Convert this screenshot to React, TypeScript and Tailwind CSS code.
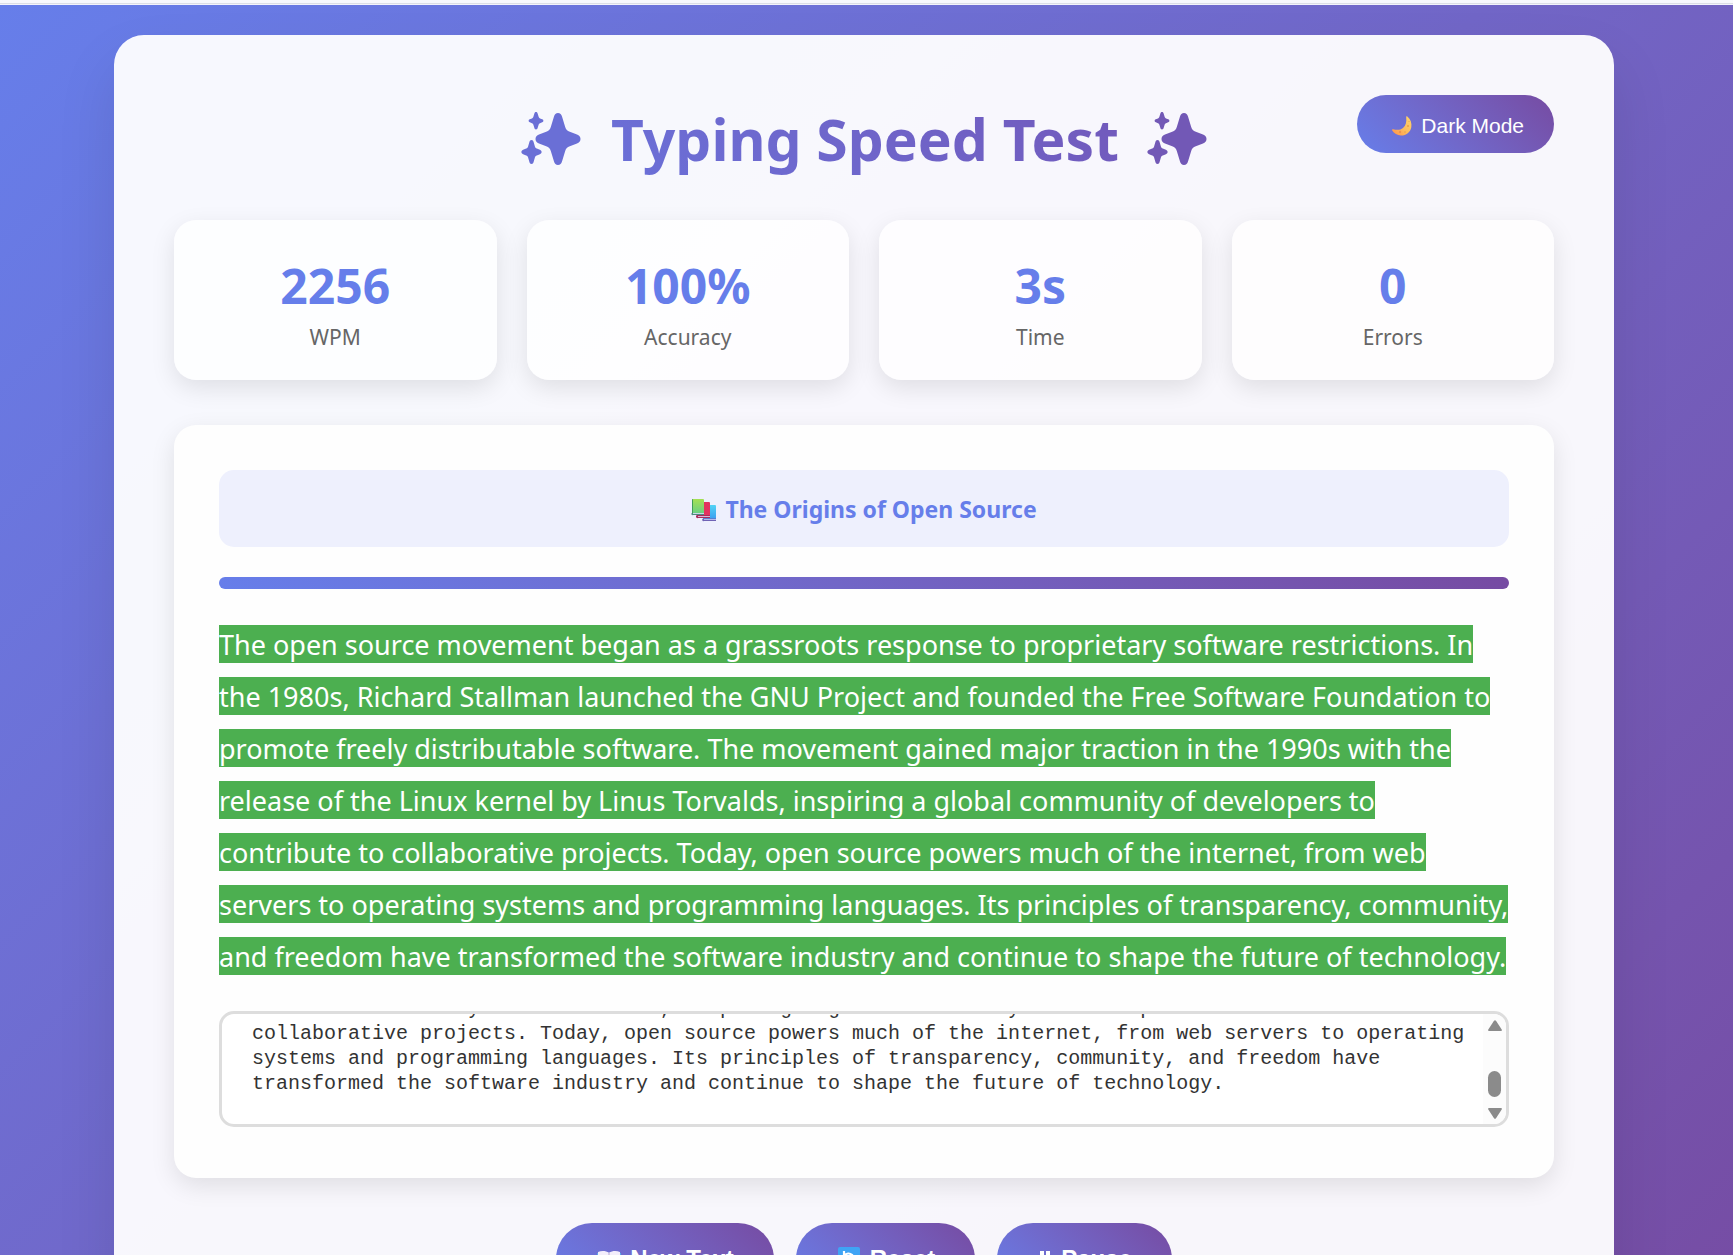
import { useEffect, useRef, useState } from "react";

const stats = [
  { value: "2256", label: "WPM" },
  { value: "100%", label: "Accuracy" },
  { value: "3s", label: "Time" },
  { value: "0", label: "Errors" },
];

const passageLines = [
  "The open source movement began as a grassroots response to proprietary software restrictions. In",
  "the 1980s, Richard Stallman launched the GNU Project and founded the Free Software Foundation to",
  "promote freely distributable software. The movement gained major traction in the 1990s with the",
  "release of the Linux kernel by Linus Torvalds, inspiring a global community of developers to",
  "contribute to collaborative projects. Today, open source powers much of the internet, from web",
  "servers to operating systems and programming languages. Its principles of transparency, community,",
  "and freedom have transformed the software industry and continue to shape the future of technology.",
];

function Sparkles({ className }: { className: string }) {
  return (
    <svg viewBox="0 0 60 54" className={className} fill="currentColor" aria-hidden="true">
      <path d="M37 1c2.200 0 3.300 1.300 4 3.500l3.200 10.500c.8 2.600 2 3.900 4.600 4.800l7.200 2.700c2.200.9 3.500 2.200 3.500 4.500s-1.300 3.600-3.500 4.500l-7.200 2.700c-2.600.9-3.800 2.200-4.600 4.800L41 49.500c-.7 2.200-1.800 3.500-4 3.500s-3.300-1.300-4-3.500L29.800 39c-.8-2.600-2-3.900-4.600-4.800L18 31.500c-2.200-.9-3.500-2.200-3.500-4.500s1.300-3.600 3.500-4.500l7.200-2.700c2.600-.9 3.800-2.200 4.600-4.800L33 4.500C33.700 2.300 34.800 1 37 1Z" />
      <path d="M15 0c1 0 1.400.7 1.700 1.700l1 3.400c.2.700.6 1 1.300 1.300l2.200.9c.8.300 1.200.8 1.200 1.500s-.4 1.200-1.200 1.500l-2.200.9c-.7.300-1.100.6-1.300 1.300l-1 3.300c-.3 1-.7 1.600-1.700 1.600s-1.400-.6-1.700-1.600l-1-3.300c-.2-.7-.6-1-1.300-1.300l-2.200-.9c-.8-.300-1.200-.8-1.200-1.500s.4-1.200 1.200-1.500l2.200-.9c.7-.3 1.100-.6 1.300-1.300l1-3.400C13.600.7 14 0 15 0Z" />
      <path d="M10.500 28c1.200 0 1.800.8 2.100 2l1.300 4.600c.3 1 .9 1.600 1.900 2l3.100 1.200c1.100.5 1.700 1.100 1.700 2.200s-.6 1.700-1.700 2.200l-3.100 1.200c-1 .4-1.600 1-1.900 2L12.600 50c-.3 1.200-.9 2-2.100 2s-1.800-.8-2.100-2l-1.300-4.600c-.3-1-.9-1.600-1.900-2l-3.100-1.200C1 41.700.4 41.100.4 40s.6-1.700 1.700-2.200l3.100-1.200c1-.4 1.600-1 1.900-2L8.400 30c.3-1.200.9-2 2.100-2Z" />
    </svg>
  );
}

function Moon() {
  return (
    <svg viewBox="0 0 22 22" className="h-[22px] w-[22px]" aria-hidden="true">
      <defs>
        <linearGradient id="moon" x1="0" y1="1" x2="1" y2="0">
          <stop offset="0" stopColor="#ff8f4a" />
          <stop offset="0.45" stopColor="#fdbb5c" />
          <stop offset="1" stopColor="#ffd56b" />
        </linearGradient>
      </defs>
      <path
        d="M16.300 1.400c3.300 2.700 4.700 6.600 4 10.800-.9 5-5.300 8.400-10.300 8.300-3.800-.1-7-1.700-8.800-4.900-.5-.9.100-1.500 1-1.300 4 .9 7.400.7 9.800-1.300 2.900-2.300 3.700-6 3.200-10.700-.1-1 .4-1.500 1.100-.9Z"
        fill="url(#moon)"
      />
      <circle cx="17" cy="11" r="1" fill="#e8a048" />
      <circle cx="9" cy="17" r="1.200" fill="#ec9450" />
      <circle cx="14" cy="17" r=".8" fill="#e8a048" />
      <circle cx="18" cy="6.500" r=".6" fill="#e8a048" />
    </svg>
  );
}

function Books() {
  return (
    <svg viewBox="0 0 26 24" className="h-6 w-[26px]" aria-hidden="true">
      <defs>
        <linearGradient id="book-green" x1="0" y1="0" x2="0" y2="1">
          <stop offset="0" stopColor="#a5e052" />
          <stop offset="1" stopColor="#66cf86" />
        </linearGradient>
        <linearGradient id="book-blue" x1="0" y1="0" x2="0" y2="1">
          <stop offset="0" stopColor="#52d3f5" />
          <stop offset="1" stopColor="#3a9bef" />
        </linearGradient>
      </defs>
      <rect x="12" y="7" width="13" height="15" rx="1" fill="url(#book-blue)" />
      <path d="M12 20.500h13V23H13a1.200 1.200 0 0 1-1-2.500Z" fill="#6f63b5" />
      <path d="M13 21h12v1H13z" fill="#b9b9ea" />
      <rect x="6" y="4" width="13" height="14" rx="1" fill="#e2335f" />
      <path d="M6 17h13v3H7a1.500 1.500 0 0 1-1-3Z" fill="#a92c5d" />
      <path d="M7 18h12v1H7z" fill="#d8b6d6" />
      <rect x="1" y="1" width="12" height="15" rx="1" fill="url(#book-green)" />
      <path d="M1 2a1 1 0 0 1 1-1v14H1z" fill="#3f9d58" />
      <path d="M1 15h12v2H2a1 1 0 0 1-1-2Z" fill="#4b8a80" />
      <path d="M2 15h11v1H2z" fill="#c7d8e6" />
    </svg>
  );
}

function OpenBook() {
  return (
    <svg viewBox="0 0 26 26" className="h-[26px] w-[26px]" aria-hidden="true">
      <path d="M1 7h24v16H1z" fill="#5aa9e8" />
      <path d="M2 6c4-1.500 8-1 11 .8C16 5 20 4.500 24 6v15c-4-1.300-8-1-11 1-3-2-7-2.300-11-1Z" fill="#f3eefb" />
      <path d="M13 7v14" stroke="#c9bfe0" strokeWidth="1.500" />
      <path d="M5 11h5M5 14h5M16 11h5M16 14h5" stroke="#b9b2cc" />
    </svg>
  );
}

function ResetGlyph() {
  return (
    <svg viewBox="0 0 26 26" className="h-[26px] w-[26px]" aria-hidden="true">
      <rect x="2" y="1" width="22" height="22" rx="2" fill="#3fa4f5" />
      <path d="M8 5v5h5M8.500 9.500a5 5 0 1 1 0 6" fill="none" stroke="#fff" strokeWidth="2.200" />
    </svg>
  );
}

function PauseGlyph() {
  return (
    <svg viewBox="0 0 16 26" className="h-[26px] w-4" fill="#fff" aria-hidden="true">
      <path d="M3 5h4v14H3zM9 5h4v14H9z" />
    </svg>
  );
}

const actions = [
  { label: "New Text", icon: <OpenBook /> },
  { label: "Reset", icon: <ResetGlyph /> },
  { label: "Pause", icon: <PauseGlyph /> },
];

export default function App() {
  const [typed, setTyped] = useState(passageLines.join(" "));
  const input = useRef<HTMLTextAreaElement>(null);

  useEffect(() => {
    if (input.current) input.current.scrollTop = input.current.scrollHeight;
  }, []);

  return (
    <div className="flex h-screen flex-col overflow-hidden font-['Noto_Sans',sans-serif]">
      <div className="h-[5px] shrink-0 border-b border-[#f3f3fb] bg-[#f7f8fd]">
        <div className="mt-[3px] h-px bg-[#dcdee6]" />
      </div>
      <div className="shrink-0 bg-linear-135 from-[#667eea] to-[#764ba2] pt-[30px] pr-[5px] pb-[30px]">
        <main className="mx-auto w-full max-w-[1500px] rounded-[30px] bg-white/95 p-[60px] shadow-[0_30px_60px_rgba(0,0,0,0.1)]">
          <header className="relative mb-[38px] flex h-[87px] items-center justify-center">
            <Sparkles className="mr-[30px] h-[54px] w-[60px] text-[#6a6fd6]" />
            <h1 className="bg-linear-45 from-[#6a70d8] to-[#7259bb] bg-clip-text text-[57px] leading-[80px] font-bold text-transparent">
              Typing Speed Test
            </h1>
            <Sparkles className="ml-[28px] h-[54px] w-[60px] text-[#7258b6]" />
            <button
              type="button"
              className="absolute top-0 right-0 flex h-[58px] items-center gap-2 rounded-full bg-linear-45 from-[#667eea] to-[#764ba2] pt-[3px] pr-[30px] pl-[34px] font-['Liberation_Sans',sans-serif] text-[21px] text-white"
            >
              <Moon />
              Dark Mode
            </button>
          </header>

          <section className="mb-[45px] grid grid-cols-4 gap-[30px]" aria-label="Results">
            {stats.map((s) => (
              <div
                key={s.label}
                className="flex h-40 flex-col items-center justify-end rounded-[22px] bg-white/80 pb-7 shadow-[0_8px_24px_rgba(0,0,0,0.1)]"
              >
                <div className="text-[48px] leading-[64px] font-bold text-[#667eea]">{s.value}</div>
                <div className="mt-1 text-[21px] leading-[30px] text-[#666]">{s.label}</div>
              </div>
            ))}
          </section>

          <section className="mb-[45px] rounded-[22px] bg-[#fefefe] p-[45px] pb-[51px] shadow-[0_8px_24px_rgba(0,0,0,0.1)]">
            <h2 className="flex h-[77px] items-center justify-center gap-2 rounded-[15px] bg-[#eef0fd] pt-0.5 text-[23px] font-bold text-[#667eea]">
              <Books />
              The Origins of Open Source
            </h2>
            <div className="mt-[30px] h-3 rounded-full bg-linear-45 from-[#667eea] to-[#764ba2]" />
            <p className="mt-[30px] text-[27px] leading-[52px] whitespace-nowrap text-white">
              {passageLines.map((line) => (
                <span key={line} className="block">
                  <span className="bg-[#4caf50] pt-px">{line}</span>
                </span>
              ))}
            </p>
            <div className="mt-7 flex h-[116px] overflow-hidden rounded-[15px] border-3 border-[#ddd] bg-white">
              <textarea
                ref={input}
                aria-label="Type the passage"
                value={typed}
                onChange={(e) => setTyped(e.target.value)}
                className="min-w-0 flex-1 resize-none overflow-hidden pt-[30px] pr-4 pb-7 pl-[30px] font-['Liberation_Mono',monospace] text-[20px] leading-[25px] text-[#333] outline-none"
              />
              <div className="flex w-[23px] shrink-0 flex-col items-center bg-[#fcfcfc] pt-1.5 pb-[5px]">
                <svg viewBox="0 0 14 12" className="h-3 w-3.5" fill="#8b8b8b" aria-hidden="true">
                  <path d="M6 .8a1.300 1.300 0 0 1 2 0l5.700 8.700c.6.900.1 1.500-.8 1.500H1.100c-.9 0-1.400-.6-.8-1.500Z" />
                </svg>
                <div className="mt-auto mb-2.5 h-[26px] w-[13px] rounded-full bg-[#8b8b8b]" />
                <svg viewBox="0 0 14 12" className="h-3 w-3.5" fill="#8b8b8b" aria-hidden="true">
                  <path d="M6 11.200a1.300 1.300 0 0 0 2 0l5.700-8.700c.6-.9.1-1.500-.8-1.500H1.100c-.9 0-1.400.6-.8 1.500Z" />
                </svg>
              </div>
            </div>
          </section>

          <div className="flex justify-center gap-[22px]">
            {actions.map((a) => (
              <button
                key={a.label}
                type="button"
                className="flex h-[72px] items-center gap-2 rounded-full bg-linear-45 from-[#667eea] to-[#764ba2] px-10 font-['Liberation_Sans',sans-serif] text-[24px] font-bold text-white"
              >
                {a.icon}
                {a.label}
              </button>
            ))}
          </div>
        </main>
      </div>
    </div>
  );
}
